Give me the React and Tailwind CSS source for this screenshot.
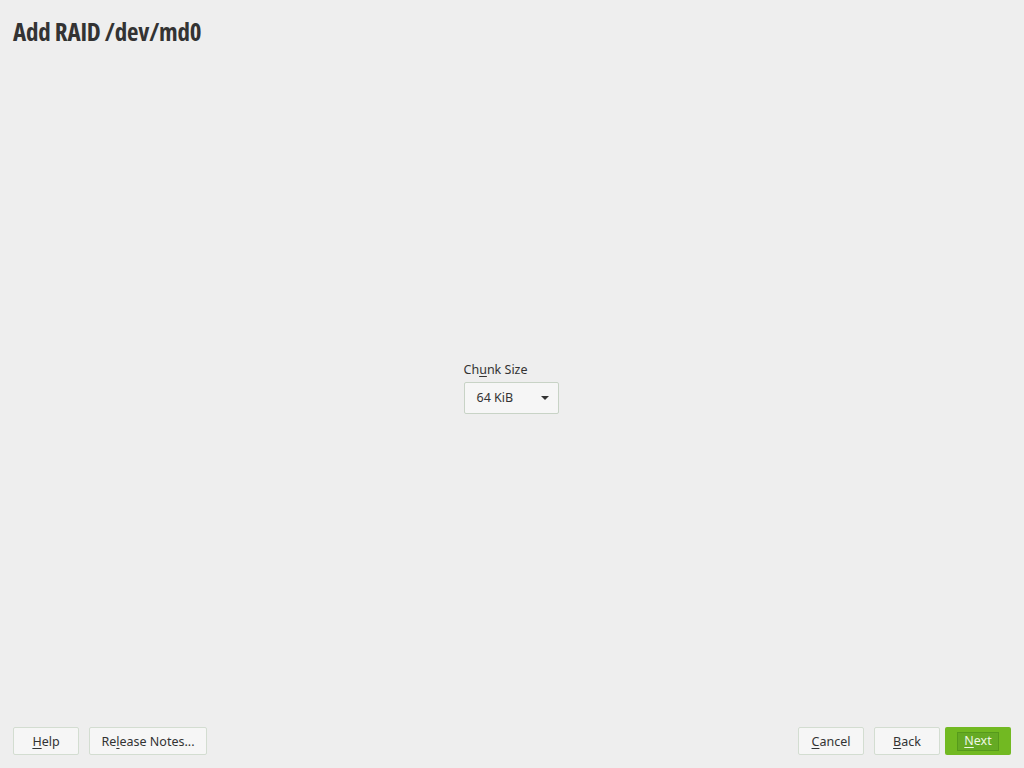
import React from "react";

function Btn({ children, className = "" }) {
  return (
    <div
      className={`h-[28px] flex items-center justify-center pt-[2px] bg-[#f6f6f6] border border-[#d3ddd1] rounded-[2px] text-[12.5px] text-[#333] ${className}`}
    >
      {children}
    </div>
  );
}

export default function App() {
  return (
    <div
      className="w-[1024px] h-[768px] bg-[#eeeeee] flex flex-col overflow-hidden relative"
      style={{ fontFamily: '"Noto Sans", "Open Sans", sans-serif' }}
    >
      <div className="pl-[13px] pt-[15px] h-[60px]">
        <h1
          className="text-[25px] font-bold text-[#333] leading-[32px] tracking-[-0.2px]"
          style={{ fontFamily: '"Open Sans", "Noto Sans", sans-serif', fontStretch: "condensed" }}
        >
          Add RAID /dev/md0
        </h1>
      </div>
      <div className="flex-1 flex items-center justify-center">
        <div className="flex flex-col mt-[-13px] ml-[-2px]">
          <div className="text-[12.5px] text-[#333] leading-[18px] mb-[3px]">
            Ch<span className="underline underline-offset-2">u</span>nk Size
          </div>
          <div className="w-[95px] h-[32px] bg-[#f6f6f6] border border-[#c8d3c6] rounded-[2px] flex items-center pl-[12px] pr-[8px] pt-[2px] justify-between text-[12.5px] text-[#333]">
            <span>64 KiB</span>
            <svg width="10" height="6" viewBox="0 0 10 6" className="mt-[-2px]">
              <path d="M1 1 L9 1 L5 5 Z" fill="#333" />
            </svg>
          </div>
        </div>
      </div>
      <div className="flex items-center px-[13px] pb-[13px]">
        <Btn className="w-[66px]">
          <span><span className="underline underline-offset-2">H</span>elp</span>
        </Btn>
        <Btn className="w-[118px] ml-[10px]">
          <span>Re<span className="underline underline-offset-2">l</span>ease Notes...</span>
        </Btn>
        <div className="flex-1" />
        <Btn className="w-[66px]">
          <span><span className="underline underline-offset-2">C</span>ancel</span>
        </Btn>
        <Btn className="w-[66px] ml-[10px]">
          <span><span className="underline underline-offset-2">B</span>ack</span>
        </Btn>
        <div className="w-[66px] h-[28px] ml-[5px] bg-[#72b922] rounded-[2px] flex items-center justify-center">
          <div className="h-[19px] px-[6px] pt-[1px] bg-[#65aa24] border border-[#569a1c] flex items-center text-[12.5px] text-[#eef7e4]">
            <span><span className="underline underline-offset-2">N</span>ext</span>
          </div>
        </div>
      </div>
    </div>
  );
}
